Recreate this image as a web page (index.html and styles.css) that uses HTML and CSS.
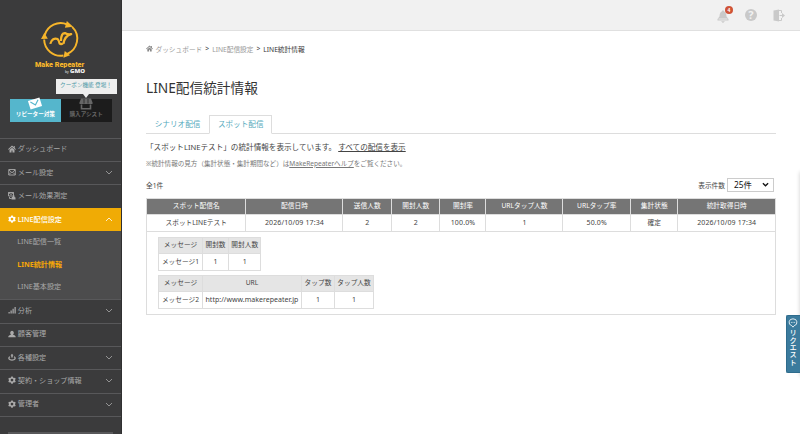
FILE: index.html
```html
<!DOCTYPE html>
<html lang="ja">
<head>
    <meta charset="UTF-8">
    <meta name="viewport" content="width=device-width, initial-scale=1.0">
    <title>LINE配信統計情報 | MakeRepeater</title>
    <link rel="stylesheet" href="styles.css">
</head>
<body>
    <div class="app">
        <aside class="sidebar">
            <div class="brand">
                <svg class="logo" viewBox="0 0 40 38">
                    <g fill="none" stroke="#f6b52b" stroke-width="2">
                        <path d="M3.8 14.5A17 17 0 0 1 27 3.6"/>
                        <path d="M32 6A17 17 0 0 1 26.5 34"/>
                        <path d="M23 35.4A17 17 0 0 1 3.2 19"/>
                    </g>
                    <g fill="#f6b52b">
                        <path d="M26.5 0l6.500 6-8.500 1z"/>
                        <path d="M3.4 12l3.600 6.300-7 .2z"/>
                        <path d="M23 37.8l1.400-7 5.400 4.400z"/>
                    </g>
                    <g fill="none" stroke="#f6b52b" stroke-width="2.300" stroke-linejoin="round">
                        <path d="M9.500 23.500C10.500 19 14 17 17 18.500Q18.500 20 19 23Q20.500 24.500 22.500 23"/>
                        <path d="M20.500 20.500C20.500 15 22 12 25 12.500Q27.500 14 31 13.500C27 14.500 24 17 23 23.500"/>
                    </g>
                </svg>
                <div class="brand-name">Make Repeater</div>
                <div class="brand-by">by <b>GMO</b></div>
            </div>
            <div class="switch">
                <a class="mode mode-on">
                    <svg class="mode-icon" viewBox="0 0 16 13"><g transform="rotate(-17 8 6.500)"><rect x="2" y="2" width="12" height="9" fill="#fff"/><path d="M4 3.800L8 8l4-4.200" fill="none" stroke="#55b6cc" stroke-width="1.200"/></g></svg>
                    <span>リピーター対策</span>
                </a>
                <a class="mode">
                    <svg class="mode-icon" viewBox="0 0 16 13"><path d="M3 1.500h10l1.500 4v1.500h-13V5.500z" fill="#666"/><path d="M6 2v4.500M10 2v4.500" stroke="#1c1c1c" stroke-width=".7"/><path d="M3.500 7.500v4.300h9V7.500" fill="none" stroke="#666" stroke-width="1.600"/></svg>
                    <span>購入アシスト</span>
                </a>
                <div class="balloon">クーポン機能 登場！</div>
            </div>
            <nav class="menu">
                <a class="item"><svg class="icon" viewBox="0 0 16 16"><path d="M8 1L0 8.500l1.500 1L8 4l6.500 5.500 1.500-1L13.500 6V2h-2v2zM3 9.500V15h4v-4h2v4h4V9.500L8 5.500z"/></svg>ダッシュボード</a>
                <a class="item"><svg class="icon" viewBox="0 0 16 16"><path d="M1.500 3h13v11h-13zM2 4l6 5.500L14 4M2 13l4-4M14 13l-4-4" class="line"/></svg>メール設定<svg class="arrow" viewBox="0 0 8 5"><path d="M1 1l3 3 3-3"/></svg></a>
                <a class="item"><svg class="icon" viewBox="0 0 16 16"><path d="M1 1h10v7H1zM1 1l5 4 5-4M3 10v3h4" class="line"/><path d="M8 10l2-1V7h3v3l2 1v4H7v-3z"/></svg>メール効果測定</a>
                <a class="item item-open"><svg class="icon" viewBox="0 0 16 16"><path d="M6.500 1h3l.5 2 2 1 2-.5 1.500 2.500L14 7.500v1.500l1.500 1.500L14 13l-2-.5-2 1-.5 2h-3L6 13.500l-2-1-2 .5-1.500-2.500L2 9V7.500L.5 6 2 3.500 4 4l2-1zM8 5.500a2.700 2.700 0 1 0 0 5.400 2.700 2.700 0 0 0 0-5.400z" fill-rule="evenodd"/></svg>LINE配信設定<svg class="arrow" viewBox="0 0 8 5"><path d="M1 4l3-3 3 3"/></svg></a>
                <div class="submenu">
                    <a class="subitem">LINE配信一覧</a>
                    <a class="subitem current">LINE統計情報</a>
                    <a class="subitem">LINE基本設定</a>
                </div>
                <a class="item"><svg class="icon" viewBox="0 0 16 16"><path d="M1 12h2.500v3H1zM5 9h2.500v6H5zM9 5.500h2.500V15H9zM13 2h2.500v13H13z"/></svg>分析<svg class="arrow" viewBox="0 0 8 5"><path d="M1 1l3 3 3-3"/></svg></a>
                <a class="item"><svg class="icon" viewBox="0 0 16 16"><path d="M8 1.500a3.700 4.200 0 0 1 2 7.700c0 1 5.500 1 5.500 5.300H.5c0-4.300 5.500-4.300 5.500-5.300a3.700 4.200 0 0 1 2-7.700z"/></svg>顧客管理</a>
                <a class="item"><svg class="icon" viewBox="0 0 16 16"><path d="M8 1.500L11 5H9.500v4h-3V5H5z"/><path d="M4 7.500C-.5 10 2 14 8 14s8.500-4 4-6.500" class="line wide"/></svg>各種設定<svg class="arrow" viewBox="0 0 8 5"><path d="M1 1l3 3 3-3"/></svg></a>
                <a class="item"><svg class="icon" viewBox="0 0 16 16"><path d="M6.500 1h3l.5 2 2 1 2-.5 1.500 2.500L14 7.500v1.500l1.500 1.500L14 13l-2-.5-2 1-.5 2h-3L6 13.500l-2-1-2 .5-1.500-2.500L2 9V7.500L.5 6 2 3.500 4 4l2-1zM8 5.500a2.700 2.700 0 1 0 0 5.400 2.700 2.700 0 0 0 0-5.400z" fill-rule="evenodd"/></svg>契約・ショップ情報<svg class="arrow" viewBox="0 0 8 5"><path d="M1 1l3 3 3-3"/></svg></a>
                <a class="item"><svg class="icon" viewBox="0 0 16 16"><path d="M6.500 1h3l.5 2 2 1 2-.5 1.500 2.500L14 7.500v1.500l1.500 1.500L14 13l-2-.5-2 1-.5 2h-3L6 13.500l-2-1-2 .5-1.500-2.500L2 9V7.500L.5 6 2 3.500 4 4l2-1zM8 5.500a2.700 2.700 0 1 0 0 5.400 2.700 2.700 0 0 0 0-5.400z" fill-rule="evenodd"/></svg>管理者<svg class="arrow" viewBox="0 0 8 5"><path d="M1 1l3 3 3-3"/></svg></a>
            </nav>
            <div class="side-foot"></div>
        </aside>

        <div class="page">
            <header class="topbar">
                <div class="bell">
                    <svg viewBox="0 0 12 13"><path d="M6 0l1.300 1.500C9 2.500 9.300 4 9.500 6.500L11.500 9v1.500H.5V9l2-2.500C2.700 4 3 2.500 4.700 1.500zM4 11.300h4L6 13z"/><path d="M1.500 9h9" stroke="#f1f1f1" stroke-width=".8"/></svg>
                    <span class="badge">4</span>
                </div>
                <div class="help">?</div>
                <svg class="exit" viewBox="0 0 12 13"><path d="M.5 1.500L6 .5v12l-5.500-1z"/><path d="M6 1.500h2.500V4M6 11.500h2.500V9" fill="none" stroke="#c9c9c9"/><path d="M6.500 6H9V4l3 2.500L9 9V7H6.500z"/></svg>
            </header>
            <main class="content">
                <div class="crumbs">
                    <svg class="home" viewBox="0 0 16 16"><path d="M8 1L0 8.500l1.500 1L8 4l6.500 5.500 1.500-1L13.500 6V2h-2v2zM3 9.500V15h4v-4h2v4h4V9.500L8 5.500z"/></svg>
                    <a>ダッシュボード</a><i>&gt;</i><a>LINE配信設定</a><i>&gt;</i><span>LINE統計情報</span>
                </div>
                <h1>LINE配信統計情報</h1>
                <div class="tabs">
                    <a class="tab">シナリオ配信</a>
                    <a class="tab tab-on">スポット配信</a>
                </div>
                <p class="lead">「スポットLINEテスト」の統計情報を表示しています。<a>すべての配信を表示</a></p>
                <p class="note">※統計情報の見方（集計状態・集計期間など）は<a>MakeRepeaterヘルプ</a>をご覧ください。</p>
                <div class="tools">
                    <span>全1件</span>
                    <label>表示件数 <span class="select">25件<svg viewBox="0 0 8 5"><path d="M1 1l3 3 3-3"/></svg></span></label>
                </div>
                <table class="stats">
                    <colgroup><col class="w-name"><col class="w-date"><col class="w-num"><col class="w-num"><col class="w-rate"><col class="w-tap"><col class="w-taprate"><col class="w-state"><col></colgroup>
                    <tr><th>スポット配信名</th><th>配信日時</th><th>送信人数</th><th>開封人数</th><th>開封率</th><th>URLタップ人数</th><th>URLタップ率</th><th>集計状態</th><th>統計取得日時</th></tr>
                    <tr><td>スポットLINEテスト</td><td class="num">2026/10/09 17:34</td><td class="num">2</td><td class="num">2</td><td class="num">100.0%</td><td class="num">1</td><td class="num">50.0%</td><td>確定</td><td class="num">2026/10/09 17:34</td></tr>
                    <tr>
                        <td class="detail" colspan="9">
                            <table class="inner opens">
                                <colgroup><col class="w-msg"><col class="w-cnt"><col></colgroup>
                                <tr><th>メッセージ</th><th>開封数</th><th>開封人数</th></tr>
                                <tr><td>メッセージ1</td><td class="num">1</td><td class="num">1</td></tr>
                            </table>
                            <table class="inner taps">
                                <colgroup><col class="w-msg"><col class="w-url"><col class="w-tapcnt"><col></colgroup>
                                <tr><th>メッセージ</th><th>URL</th><th>タップ数</th><th>タップ人数</th></tr>
                                <tr><td>メッセージ2</td><td class="url">http://www.makerepeater.jp</td><td class="num">1</td><td class="num">1</td></tr>
                            </table>
                        </td>
                    </tr>
                </table>
            </main>
        </div>
    </div>
    <div class="edge"></div>
    <a class="request">
        <svg viewBox="0 0 12 12"><path d="M6 1a4.600 4.200 0 0 1 1.500 8.200L6 11 4.500 9.200A4.600 4.200 0 0 1 6 1z"/><path d="M3.500 5.300h5" stroke-dasharray="1 1"/></svg>
        <span>リクエスト</span>
    </a>
</body>
</html>
```
FILE: styles.css
```css
* {
    box-sizing: border-box;
}

body {
    margin: 0;
    height: 434px;
    overflow: hidden;
    font-family: "Noto Sans", "Noto Sans CJK JP", sans-serif;
    font-size: 6.7px;
    color: #444;
    background: #fff;
}

.app {
    display: flex;
    height: 434px;
}

/* sidebar */
.sidebar {
    width: 121.6px;
    flex: none;
    background: #3b3b3c;
    border-right: 1px solid #303031;
    overflow: hidden;
}

.brand {
    height: 98.5px;
    padding-top: 20.5px;
    color: #f6b52b;
}

.logo {
    display: block;
    width: 39px;
    height: 37px;
    margin: 0 auto 0 40.5px;
}

.brand-name {
    margin: 3.5px 0 0 35.3px;
    font-family: Roboto, sans-serif;
    font-size: 8px;
    line-height: 8px;
    font-weight: 900;
    white-space: nowrap;
    transform: scaleX(.9);
    transform-origin: left;
}

.brand-by {
    margin-left: 65px;
    font-size: 3.5px;
    line-height: 5px;
    color: #eee;
    white-space: nowrap;
}

.brand-by b {
    display: inline-block;
    font-size: 4.5px;
    font-weight: 900;
    transform: scaleX(1.35);
    transform-origin: left;
}

.switch {
    position: relative;
    display: flex;
    width: 101.5px;
    height: 23.5px;
    margin-left: 10px;
}

.mode {
    flex: 1;
    display: flex;
    flex-direction: column;
    align-items: center;
    background: #1c1c1c;
    color: #666;
    font-size: 5.6px;
    font-weight: bold;
    line-height: 8px;
    white-space: nowrap;
}

.mode-on {
    background: #55b6cc;
    color: #fff;
}

.mode-icon {
    width: 16px;
    height: 13px;
    margin-top: -1.5px;
}

.balloon {
    position: absolute;
    left: 45.5px;
    top: -20px;
    width: 61px;
    height: 15px;
    line-height: 13.5px;
    text-align: center;
    font-size: 5.6px;
    color: #4b97a5;
    background: #eee;
    white-space: nowrap;
}

.balloon::after {
    content: "";
    position: absolute;
    left: 27.5px;
    top: 15px;
    border: 3px solid transparent;
    border-top: 4.5px solid #eee;
    border-bottom: 0;
}

.menu {
    margin-top: 15.8px;
    font-size: 7.1px;
    color: #aaa;
}

.item {
    display: flex;
    align-items: center;
    height: 23.35px;
    padding: 0 7.5px 3px 7.5px;
    border-top: 1px solid #58585a;
    white-space: nowrap;
}

.item:last-child {
    border-bottom: 1px solid #58585a;
    height: 24.4px;
}

.icon {
    width: 8px;
    height: 8px;
    margin-right: 2.3px;
    margin-top: 1px;
    fill: currentColor;
}

.line {
    fill: none;
    stroke: currentColor;
    stroke-width: 1.8;
}

.wide {
    stroke-width: 2.5;
}

.arrow {
    width: 8px;
    height: 5px;
    margin-left: auto;
    margin-top: 2px;
    fill: none;
    stroke: currentColor;
    stroke-width: .8;
}

.item-open {
    background: #f0ab05;
    border-top-color: #f0ab05;
    color: #fff;
    font-weight: 500;
}

.submenu {
    padding-bottom: 0.5px;
    background: #4c4c4d;
}

.subitem {
    display: block;
    height: 22.5px;
    line-height: 20px;
    padding-left: 17.3px;
}

.current {
    color: #f7a707;
    font-weight: bold;
}

.side-foot {
    height: 10px;
    margin: 15px 8px 0;
    background: #58585a;
}

/* main column */
.page {
    flex: 1;
    min-width: 0;
}

.topbar {
    display: flex;
    align-items: center;
    justify-content: flex-end;
    height: 31px;
    padding-right: 15.5px;
    background: #f1f1f1;
    border-bottom: 1px solid #e0e0e0;
    fill: #c9c9c9;
}

.bell {
    position: relative;
    width: 12px;
    height: 13px;
    margin-top: 2px;
}

.bell svg {
    display: block;
    width: 12px;
    height: 13px;
}

.badge {
    position: absolute;
    left: 8px;
    top: -3.5px;
    width: 8px;
    height: 8px;
    line-height: 8px;
    border-radius: 50%;
    text-align: center;
    font-size: 5px;
    font-weight: bold;
    color: #fff;
    background: #cf5337;
}

.help {
    width: 12.5px;
    height: 12.5px;
    margin: 0 15.5px;
    line-height: 12.5px;
    border-radius: 50%;
    text-align: center;
    font-size: 11px;
    font-weight: bold;
    color: #f1f1f1;
    background: #c9c9c9;
}

.exit {
    width: 12px;
    height: 13px;
}

.content {
    padding: 11.5px 24.5px 0 24.4px;
}

.crumbs {
    display: flex;
    align-items: center;
    height: 12px;
    color: #999;
}

.home {
    width: 7px;
    height: 7px;
    margin-right: 2.5px;
    fill: #888;
}

.crumbs i {
    margin: 0 3px;
    font-style: normal;
    color: #444;
}

.crumbs span {
    color: #333;
}

h1 {
    margin: 23px 0 17.5px;
    font-size: 13.7px;
    line-height: 20px;
    font-weight: normal;
    color: #333;
}

.tabs {
    display: flex;
    height: 19px;
    border-bottom: 1px solid #ddd;
    font-size: 7.6px;
    color: #55aabd;
}

.tab {
    height: 19px;
    padding: 0 7.8px;
    line-height: 17px;
    border: 1px solid transparent;
}

.tab-on {
    border-color: #ddd;
    border-bottom-color: #fff;
    background: #fff;
}

.content p {
    margin: 0;
    white-space: nowrap;
}

.content p a {
    text-decoration: underline;
}

.content .lead {
    margin-top: 5.5px;
    font-size: 7.6px;
    line-height: 15px;
}

.content .lead a {
    margin-left: 2px;
}

.content .note {
    margin-top: 1.5px;
    font-size: 6.57px;
    line-height: 15px;
    color: #777;
}

.tools {
    display: flex;
    justify-content: space-between;
    align-items: center;
    height: 15px;
    margin: 6px 2px 5.5px 0;
}

.tools label {
    display: flex;
    align-items: center;
}

.select {
    display: flex;
    align-items: center;
    width: 46.5px;
    height: 14px;
    margin-left: 2px;
    padding: 0 4px 1px 6px;
    border: 1px solid #ccc;
    font-size: 8.4px;
    color: #111;
}

.select svg {
    width: 7px;
    height: 5px;
    margin-left: auto;
    fill: none;
    stroke: #111;
    stroke-width: 1.5;
}

/* tables */
table {
    border-collapse: collapse;
    table-layout: fixed;
}

th, td {
    padding: 0 0 .5px;
    border: 1px solid #ddd;
    text-align: center;
    font-weight: normal;
    line-height: 10px;
    white-space: nowrap;
}

.stats {
    width: 630px;
}

.stats tr {
    height: 16.5px;
}

.stats th {
    color: #fff;
    background: #757575;
}

.num {
    font-size: 7px;
    letter-spacing: .13px;
}

.url {
    font-size: 7px;
    letter-spacing: .03px;
}

.w-name { width: 99.5px; }
.w-date { width: 97px; }
.w-num { width: 48.5px; }
.w-rate { width: 46px; }
.w-tap { width: 77px; }
.w-taprate { width: 67.5px; }
.w-state { width: 47.5px; }

.stats .detail {
    height: 83.5px;
    padding: 5px 0 0 11px;
    text-align: left;
    vertical-align: top;
}

.stats .inner th {
    color: #444;
    background: #e5e5e5;
}

.opens {
    width: 103.5px;
    margin-bottom: 4px;
}

.taps {
    width: 216px;
}

.w-msg { width: 44px; }
.w-cnt { width: 26px; }
.w-url { width: 99px; }
.w-tapcnt { width: 33px; }

/* shadow of the closed request panel */
.edge {
    position: absolute;
    right: -4px;
    top: 172px;
    width: 4px;
    height: 204px;
    box-shadow: 0 0 4px rgba(0,0,0,0.2);
}

/* request tab stuck to the right edge */
.request {
    position: absolute;
    right: 0;
    top: 315px;
    width: 14.5px;
    height: 58px;
    padding-top: 2px;
    display: flex;
    flex-direction: column;
    align-items: center;
    color: #fff;
    background: #3b7b9d;
    border: 1px solid #2f6c8d;
    border-right: 0;
    border-radius: 2px 0 0 2px;
}

.request svg {
    width: 10px;
    height: 10px;
    fill: none;
    stroke: #fff;
}

.request span {
    margin-top: 1px;
    writing-mode: vertical-rl;
    font-size: 7.3px;
    font-weight: 500;
    line-height: 10px;
}
```
